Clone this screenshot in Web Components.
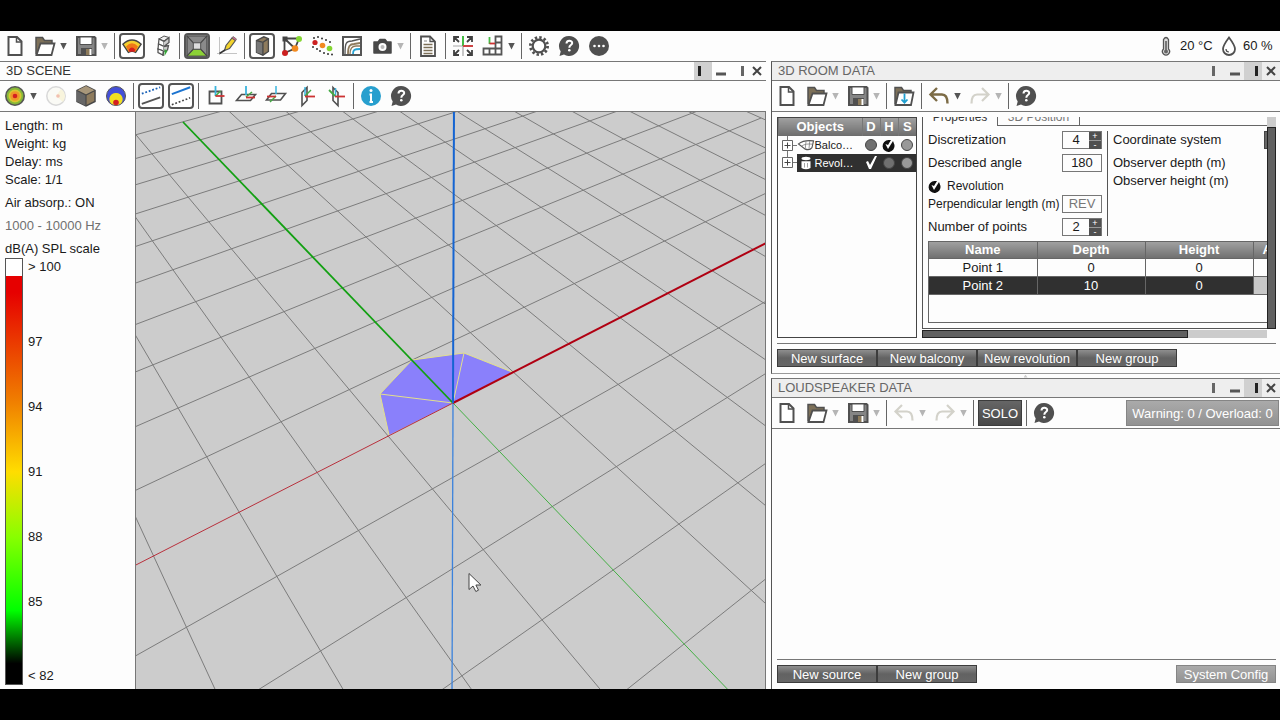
<!DOCTYPE html>
<html lang="en">
<head>
<meta charset="utf-8">
<title>3D Scene</title>
<style>
html, body { margin: 0; background: #000; }
body { box-sizing: border-box; min-height: 100vh; padding: 31px 0; display: flex; flex-direction: column; font: 13px/18px "Liberation Sans", Arial, sans-serif; color: #1a1a1a; }
</style>
</head>
<body>
<sound-app></sound-app>
<script>
const ICONS = {
  new: '<path d="M5.500 3h8.500l4.500 4.500V21h-13z" fill="#fff" stroke="#505050" stroke-width="2"/><path d="M13.500 3v5h5" fill="none" stroke="#505050" stroke-width="1.500"/>',
  open: '<path d="M3 20.500V3.500h6.500l2 3h7.500v4" fill="#7d7058" stroke="#505050" stroke-width="1.500"/><path d="M3.500 21l4-11.500h14L18.500 21z" fill="#fff" stroke="#505050" stroke-width="1.800"/>',
  load: '<path d="M3 20.500V3.500h6.500l2 3h7.500v4" fill="#7d7058" stroke="#505050" stroke-width="1.500"/><path d="M3.500 21l3-12.500h15L19 21z" fill="#fff" stroke="#505050" stroke-width="1.800"/><path d="M12.500 9.500v9M9.500 15.500l3 3.200 3-3.200" fill="none" stroke="#1f9fd0" stroke-width="1.800"/>',
  save: '<path d="M3 3h17.500l1 1V21H3z" fill="#858585" stroke="#505050" stroke-width="2"/><path d="M6 3h12v7.500H6z" fill="#fff" stroke="#505050"/><path d="M7 14h11v7H7z" fill="#505050"/><path d="M12 15h4v6h-4z" fill="#8c7a5a"/><path d="M15.500 15h2v6h-2z" fill="#fff"/>',
  map: '<path d="M2 10Q12 1 22 10L16 19q-4-2.500-8 0z" fill="#f5cf30" stroke="#444" stroke-width="1.500"/><path d="M5.500 12.500Q12 5.500 18.500 12.500L15.500 18.500q-3.500-2-7 0z" fill="#f07818"/><path d="M8.500 16q3.500-4.500 7 0l-1 2.500q-2.500-1-5 0z" fill="#d81e1e"/>',
  speaker: '<path d="M9 5l5-3 5 1.500-5 3.500z" fill="#eee" stroke="#555"/><path d="M9 5l5 2.500v5L8.500 10z" fill="#fff" stroke="#555" stroke-width="1.300"/><path d="M8.500 10l5.500 2.500-.5 4.500-5.500-2z" fill="#fff" stroke="#555" stroke-width="1.300"/><path d="M8 15l5.500 2-.5 4-5-2.500z" fill="#fff" stroke="#555" stroke-width="1.300"/><path d="M14 7.500l5-4v5l-5 4 4.500-1-1 4.500-4 1.500-.5 4.500" fill="#ccc" stroke="#555" stroke-width="1.300"/><path d="M14.500 15l3 2-3 5z" fill="#36a53a"/>',
  room: '<path d="M1 1h22v22H1z" fill="#8a8a8a" stroke="#484848" stroke-width="1.500"/><path d="M1 23L8 15.500h8L23 23z" fill="#8cd136" stroke="#484848"/><path d="M8 8.500h8v7H8z" fill="#ddd" stroke="#484848"/><path d="M1 1l7 7.500M23 1l-7 7.500M1 23l7-7.500M23 23l-7-7.500" stroke="#484848" stroke-width="1.300"/>',
  pencil: '<path d="M4.500 3v18M2 19.500h20" stroke="#c4c4c4" stroke-width="1"/><path d="M9.500 16.500l1.500-5 6-7.500 3.500 2.500-6 8z" fill="#f2d32c" stroke="#555" stroke-width="1.200"/><path d="M17 4l1-1.500 3.500 2.500-1 1.500z" fill="#d9688c" stroke="#666" stroke-width=".8"/><path d="M4.500 19.500l5.500-3.500" stroke="#333" stroke-width="1.500"/>',
  block: '<path d="M6 6l8-4 5 2v14l-6 4-7-3z" fill="#8e7b5d" stroke="#484848" stroke-width="1.500"/><path d="M6 6l7 2v13l-7-2z" fill="#777"/><path d="M13 8v14M6 6l7 2 6-4" fill="none" stroke="#484848" stroke-width="1.500"/>',
  cube: '<path d="M12 2l9 4.500v11L12 22l-9-4.500v-11z" fill="#8e7b5d" stroke="#484848" stroke-width="1.500"/><path d="M3 6.500l9 4.500v11l-9-4.500z" fill="#666"/><path d="M12 2l9 4.500-9 4.500-9-4.500z" fill="#a8977a"/><path d="M3 6.500l9 4.500 9-4.500M12 11v11" fill="none" stroke="#484848" stroke-width="1.200"/>',
  nodes: '<path d="M4.500 4.500h14.500L15 14.500 4.500 19zL15 14.500" fill="none" stroke="#444" stroke-width="1.800"/><path d="M2.500 2.500h5v5h-5z" fill="#444"/><circle cx="19" cy="5" r="3" fill="#84d632"/><circle cx="15" cy="14.500" r="3.300" fill="#f28a20"/><circle cx="5" cy="19" r="3" fill="#cc2020"/>',
  sources: '<g fill="#333"><circle cx="4" cy="4" r="1"/><circle cx="8" cy="3" r="1"/><circle cx="12" cy="4.500" r="1"/><circle cx="16" cy="6" r="1"/><circle cx="20" cy="8" r="1"/><circle cx="3" cy="13" r="1"/><circle cx="7" cy="15" r="1"/><circle cx="10" cy="17" r="1"/><circle cx="14" cy="19" r="1"/><circle cx="18" cy="20" r="1"/><circle cx="22" cy="20.500" r="1"/></g><circle cx="5" cy="8.500" r="2.600" fill="#cc2020"/><circle cx="12.500" cy="11.500" r="2.800" fill="#f28a20"/><circle cx="19.500" cy="14.500" r="2.800" fill="#84d632"/>',
  contours: '<path d="M3 3h18v18H3z" fill="#fff" stroke="#555" stroke-width="2"/><path d="M5 20c0-11 1-13 7-13l8-2" fill="none" stroke="#555" stroke-width="1.300"/><path d="M8 20c0-8 2-10 6-10l6-1" fill="none" stroke="#8e7b5d" stroke-width="1.800"/><path d="M10 20c0-5 2-8 6-8h4" fill="none" stroke="#8e7b5d" stroke-width="1.300"/><path d="M13 20c0-4 1-5 7-5" fill="none" stroke="#25a3d4" stroke-width="1.800"/>',
  camera: '<path d="M4 8h4l2-2.500h5L17 8h4v11H4z" fill="#484848" stroke="#484848" stroke-width="1.500" stroke-linejoin="round"/><circle cx="12.500" cy="13" r="4" fill="#fff"/><circle cx="12.500" cy="13" r="2" fill="#bbb"/>',
  doc: '<path d="M5 2.500h9l5 5V22H5z" fill="#fff" stroke="#505050" stroke-width="1.800"/><path d="M14 2.500v5h5" fill="none" stroke="#505050" stroke-width="1.300"/><path d="M7.500 10.500h9M7.500 13.500h9M7.500 16.500h9M7.500 19.500h9" stroke="#7d7058" stroke-width="1.500"/><path d="M8 7h3" stroke="#888"/>',
  fit: '<path d="M12 2v20" stroke="#aaa" stroke-width="1.300"/><path d="M2 12h20" stroke="#bbb" stroke-width="1.300"/><path d="M12 2v10" stroke="#4b4" stroke-width="2"/><path d="M12 12h10" stroke="#c44" stroke-width="2"/><path d="M3 8V3h5M3 3l5 5M16 3h5v5M21 3l-5 5M3 16v5h5M3 21l5-5M21 16v5h-5M21 21l-5-5" fill="none" stroke="#404040" stroke-width="1.800"/>',
  views: '<path d="M2.500 14.500h6v6h-6zM8.500 14.500h6v6h-6zM14.500 14.500h6v6h-6zM14.500 8.500h6v6h-6zM14.500 2.500h6v6h-6z" fill="#fff" stroke="#555" stroke-width="1.800"/><path d="M8.500 3v7" stroke="#4b4" stroke-width="1.800"/><path d="M8.500 9.500h5.500" stroke="#c33" stroke-width="1.800"/>',
  gear: '<circle cx="12" cy="12" r="8.600" fill="none" stroke="#505050" stroke-width="2.800" stroke-dasharray="2.400 2.103"/><circle cx="12" cy="12" r="6.300" fill="#fff" stroke="#505050" stroke-width="2.200"/>',
  help: '<path d="M12 2a10 10 0 1 1-5 18.600L2.500 22l1.200-4.500A10 10 0 0 1 12 2z" fill="#505050"/><path d="M9.500 9.500c0-3.500 5.700-3.500 5.700-.5 0 2.200-2.900 2-2.900 4.700" fill="none" stroke="#fff" stroke-width="2"/><circle cx="12.300" cy="16.300" r="1.300" fill="#fff"/>',
  more: '<circle cx="12" cy="12" r="10" fill="#505050"/><circle cx="7.500" cy="12" r="1.300" fill="#fff"/><circle cx="12" cy="12" r="1.300" fill="#fff"/><circle cx="16.500" cy="12" r="1.300" fill="#fff"/>',
  info: '<circle cx="12" cy="12" r="10" fill="#279fce"/><circle cx="12" cy="6.500" r="1.500" fill="#fff"/><path d="M10.500 10.500H12v7.500M10.500 18h3.500" fill="none" stroke="#fff" stroke-width="2"/>',
  target: '<circle cx="12" cy="12" r="9.200" fill="#86b83a" stroke="#555" stroke-width="1.600"/><circle cx="12" cy="12" r="6.500" fill="#d8c830"/><circle cx="12" cy="12" r="4.800" fill="#f0962a"/><circle cx="12" cy="12" r="2.300" fill="#d42020"/>',
  faint: '<circle cx="12" cy="12" r="9.200" fill="#fafaf5" stroke="#d8d8d8" stroke-width="1.500"/><path d="M12 12l5-7a9 9 0 0 1 2 13z" fill="#f8f4dc"/><circle cx="14" cy="12" r="1.800" fill="#f2c0b0"/>',
  lobes: '<circle cx="12" cy="12" r="9.500" fill="#4450d8" stroke="#555"/><path d="M12 9a6.300 6.300 0 0 1 5 10.500 9 9 0 0 1-10 0A6.300 6.300 0 0 1 12 9z" fill="#f2e020"/><circle cx="12" cy="18.500" r="2.800" fill="#d42020"/>',
  dotline: '<path d="M2 9.500l20-7" stroke="#1c63b8" stroke-width="2" stroke-dasharray="2 2"/><path d="M2 20.500l20-7" stroke="#555" stroke-width="2"/>',
  linedot: '<path d="M2 10l20-7.500" stroke="#1c74d0" stroke-width="2.200"/><path d="M2 21.500l20-7.500" stroke="#444" stroke-width="1.800" stroke-dasharray="2 2"/>',
  front: '<path d="M5.500 7.500h12v12h-12z" fill="none" stroke="#505050" stroke-width="1.800"/><path d="M11.500 2v10" stroke="#3ab4dc" stroke-width="1.800"/><path d="M11.500 12l5-5" stroke="#4a4" stroke-width="1.500"/><path d="M11.500 12h9" stroke="#c33" stroke-width="1.800"/>',
  top: '<path d="M2.500 16.500l5-6h14l-5 6z" fill="none" stroke="#505050" stroke-width="1.600"/><path d="M12 2v9" stroke="#3ab4dc" stroke-width="1.800"/><path d="M12 13l6-5" stroke="#4a4" stroke-width="1.500"/><path d="M12 13.500h9" stroke="#c33" stroke-width="1.800"/>',
  bottom: '<path d="M2.500 16l5-6.500h14l-5 6.500z" fill="none" stroke="#505050" stroke-width="1.600"/><path d="M12 2v8" stroke="#3ab4dc" stroke-width="1.500"/><path d="M12 12l-6 6" stroke="#4a4" stroke-width="1.500"/><path d="M3 12.500h9" stroke="#c33" stroke-width="1.800"/>',
  left: '<path d="M8 8.500l5-5v13l-5 5z" fill="none" stroke="#505050" stroke-width="1.600"/><path d="M11 3v9" stroke="#3ab4dc" stroke-width="1.500"/><path d="M11 12l6-6" stroke="#4a4" stroke-width="1.500"/><path d="M11 12.500h10" stroke="#c33" stroke-width="1.800"/>',
  right: '<path d="M9 3.500l5 5v13l-5-5z" fill="none" stroke="#505050" stroke-width="1.600"/><path d="M11.500 4v8" stroke="#3ab4dc" stroke-width="1.500"/><path d="M5 6l6 6" stroke="#4a4" stroke-width="1.800"/><path d="M11 12.500h10" stroke="#c33" stroke-width="1.800"/>',
  undo: '<path d="M10 4L3.500 10.500 10 17M4 10.500h11q5.500 0 5.500 9" fill="none" stroke="#7c6b45" stroke-width="2.400"/>',
  undooff: '<path d="M10 4L3.500 10.500 10 17M4 10.500h11q5.500 0 5.500 9" fill="none" stroke="#d3d2ca" stroke-width="2.200"/>',
  redooff: '<path d="M14 4l6.500 6.500L14 17M20 10.500H9q-5.500 0-5.500 9" fill="none" stroke="#d3d2ca" stroke-width="2.200"/>',
  thermo: '<path d="M9.500 5.500q2.500-4 5 0v9.500a3.500 3.500 0 1 1-5 0z" fill="#ddd" stroke="#555" stroke-width="1.300"/><path d="M12 7v10" stroke="#777" stroke-width="2"/><circle cx="12" cy="17.500" r="2" fill="#666"/>',
  drop: '<path d="M12 3.500q-6 8-6 11.500a6 6 0 0 0 12 0q0-3.500-6-11.500z" fill="#fff" stroke="#505050" stroke-width="1.800"/><path d="M9 15q0 3 3 3" fill="none" stroke="#505050" stroke-width="1.200"/>',
  close: '<path d="M8 8l8 8M16 8l-8 8" stroke="#444" stroke-width="2"/>',
  minimize: '<path d="M7 13.500h10v3H7z" fill="#555"/>',
  balcony: '<path d="M2 10.500Q9 5 22 6.500l-2 9q-3 4-9 2z" fill="#fff" stroke="#555" stroke-width="1.500"/><path d="M6 13.500q6-4 15-2.500M12 7l-1 10M17 6.500l-1 10" fill="none" stroke="#777"/>',
  revolve: '<ellipse cx="12" cy="6" rx="6" ry="2.200" fill="#fff"/><path d="M6 9.500h12v9q-6 3.500-12 0z" fill="#fff"/><path d="M10 12v6M14 12v6" stroke="#888"/>'
};

function define(name, html, setup) {
  const t = document.createElement('template');
  t.innerHTML = html;
  customElements.define(name, class extends HTMLElement {
    connectedCallback() {
      if (this.shadowRoot) return;
      this.attachShadow({ mode: 'open' }).append(t.content.cloneNode(true));
      if (setup) setup(this, this.shadowRoot);
    }
  });
}

define('ui-icon', `<style>:host{display:block;flex:none;width:24px;height:24px}svg{display:block;width:100%;height:100%}</style><svg viewBox="0 0 24 24" aria-hidden="true"></svg>`,
  (el, root) => { root.querySelector('svg').innerHTML = ICONS[el.getAttribute('name')] || ''; });

define('tool-button', `<style>
:host{display:block;flex:none;width:30px;height:30px}
button{box-sizing:border-box;width:26px;height:26px;margin:2px;padding:0;border:0;background:none;display:flex;align-items:center;justify-content:center}
:host([pressed]) button{border:2px solid #555;border-radius:4px;background:#fff}
:host([pressed]) ui-icon{width:22px;height:22px}
</style><button type="button"></button>`,
  (el, root) => {
    const n = el.getAttribute('name'), b = root.querySelector('button');
    b.setAttribute('aria-label', n);
    b.innerHTML = `<ui-icon name="${n}"></ui-icon>`;
  });

define('tool-caret', `<style>
:host{display:block;flex:none;width:11px;height:30px;color:#555}
:host([off]){color:#b5b5b5}
button{display:flex;align-items:center;width:8px;height:30px;padding:0;border:0;background:none;color:inherit}
i{width:7px;height:7px;background:currentColor;clip-path:polygon(0 0,100% 0,50% 100%)}
</style><button type="button" aria-label="options"><i></i></button>`);

define('tool-sep', `<style>:host{display:block;flex:none;box-sizing:border-box;width:5px;height:26px;padding:0 2px}i{display:block;width:1px;height:100%;background:#666}</style><i></i>`);

define('tool-bar', `<style>:host{display:flex;align-items:center;height:30px;background:#fdfdfd;border-bottom:1px solid #777}</style><slot></slot>`);

define('push-button', `<style>
:host{display:block;flex:none;width:100px;height:18px}
button{box-sizing:border-box;display:flex;align-items:center;justify-content:center;width:100%;height:100%;padding:1px 0 0;border:1px solid #3c3c3c;background:linear-gradient(#8e8e8e,#626262 50%,#666);color:#fff;font:inherit;line-height:16px;white-space:nowrap}
:host([muted]) button{background:linear-gradient(#aaa,#929292);border-color:#858585}
:host([flat]) button{background:linear-gradient(#666,#484848)}
</style><button type="button"><slot></slot></button>`);

define('panel-window', `<style>
:host{display:flex;flex-direction:column;background:#fdfdfd;border-top:1px solid #777;color:#1a1a1a}
header{display:flex;align-items:center;height:18px;padding-left:6px;border-bottom:1px solid #777;background:#fdfdfd;color:#333}
:host([dim]) header{background:#eee;color:#666}
h2{flex:1;margin:0;font:inherit;white-space:nowrap}
button{width:18px;height:18px;padding:0;border:0;background:none;display:flex;align-items:center;flex:none}
button.center{justify-content:center}
button ui-icon{width:24px;height:24px}
i{width:3px;height:10px;background:#666}
.l i{margin-left:4px}.r i{margin-left:11px}
.on{background:#d0d0d0}.on i{background:#222}
main{flex:1;display:flex;flex-direction:column;min-height:0}
</style>
<header><h2></h2>
<button type="button" class="l" aria-label="dock left"><i></i></button>
<button type="button" class="center" aria-label="minimize"><ui-icon name="minimize"></ui-icon></button>
<button type="button" class="r" aria-label="dock right"><i></i></button>
<button type="button" class="center" aria-label="close"><ui-icon name="close"></ui-icon></button></header>
<slot name="bar"></slot><main><slot></slot></main>`,
  (el, root) => {
    root.querySelector('h2').textContent = el.getAttribute('heading');
    root.querySelector(el.getAttribute('dock') === 'left' ? '.l' : '.r').classList.add('on');
  });

define('spl-legend', `<style>
:host{box-sizing:border-box;display:flex;flex-direction:column;flex:none;width:136px;padding:5px 0 4px 5px;border-right:1px solid #777;background:#fdfdfd;white-space:nowrap}
p{margin:0 0 5px}.dim{color:#707070}p.last{margin:0}
.scale{flex:1;display:flex;gap:5px;min-height:360px}
.bar{box-sizing:border-box;width:18px;border:1px solid #555;display:flex;flex-direction:column;background:#fff}
.bar i{flex:1;margin-top:17px;background:linear-gradient(#e60000 4%,#f08000 31%,#ffdd00 48%,#88ff00 64%,#00ff00 82%,#000 95%)}
.labels{display:flex;flex-direction:column}
.mid{flex:1;display:flex;flex-direction:column;padding:33px 0 32px}
.mid span{flex:1;display:flex;align-items:center}
</style>
<p>Length: m<br>Weight: kg<br>Delay: ms<br>Scale: 1/1</p>
<p>Air absorp.: ON</p><p class="dim">1000 - 10000 Hz</p><p class="last">dB(A) SPL scale</p>
<div class="scale"><div class="bar"><i></i></div><div class="labels"><span>&gt; 100</span><div class="mid"><span>97</span><span>94</span><span>91</span><span>88</span><span>85</span></div><span>&lt; 82</span></div></div>`);

define('scene-view', `<style>:host{display:block;flex:1;min-width:0;position:relative;background:#ccc;border-right:1px solid #777;overflow:hidden}svg{position:absolute;inset:0;width:100%;height:100%}</style>
<svg viewBox="136 112 629 577" preserveAspectRatio="xMidYMid slice" role="img" aria-label="3D scene">
<g id="grid" stroke="#7c7c7c" stroke-width="1"></g>
<path d="M389 435L380 394 412 360 464 353 512 372 453 403z" fill="#8a80fb"/>
<path d="M389 435L380 394 412 360 464 353 512 372M380 394L453 403 464 353" fill="none" stroke="#e3e08c" stroke-width="1"/>
<path d="M453 403L130 568" stroke="#b8303c" stroke-width="1"/>
<path d="M453 403L735 697" stroke="#45b045" stroke-width="1"/>
<path d="M453 403L452 700" stroke="#3b82dc" stroke-width="1.300"/>
<path d="M453 403L183 122" stroke="#12a012" stroke-width="1.800"/>
<path d="M453 403L770 241" stroke="#b00012" stroke-width="2"/>
<path d="M453 403L454 100" stroke="#1464d2" stroke-width="2"/>
<path d="M469 573.500v16l4-3.500 2.800 5.500 2.700-1.300-2.600-5.200h5z" fill="#fff" stroke="#444" stroke-width="1"/>
</svg>`,
  (el, root) => {
    // perspective projection of the ground plane, one unit per grid cell
    const p = (x, y) => {
      const w = 1 + 0.0417 * x + 0.06145 * y;
      return [(453.3 + 81.3 * x - 15.83 * y) / w, (402.7 - 15.2 * x - 20.6 * y) / w];
    };
    let s = '';
    const line = (a, b) => { s += `<path d="M${a.map(v => v.toFixed(1))}L${b.map(v => v.toFixed(1))}"/>`; };
    for (let i = -7; i <= 10; i++) if (i) { line(p(i, -8), p(i, 10)); line(p(-7, i), p(10, i)); }
    root.querySelector('#grid').innerHTML = s;
  });

define('object-tree', `<style>
:host{box-sizing:border-box;display:block;flex:none;width:140px;border:1px solid #444;background:#fdfdfd}
table{border-collapse:collapse;table-layout:fixed;width:100%}
th,td{padding:0;height:18px}
th{background:linear-gradient(#a0a0a0,#6c6c6c);color:#fff;border-left:1px solid #777}
td{text-align:center}
.name{display:flex;align-items:center;height:18px;font-size:11px}
.tree{width:18px;display:flex;flex:none;height:18px;background:#fdfdfd}
.tree svg{display:block}
.name ui-icon{width:18px;height:18px}
tr.on td{background:#303030;color:#fff}
input{appearance:none;display:block;width:12px;height:12px;margin:0 auto;border:1px solid #444;border-radius:50%;background:#707070;box-sizing:border-box}
input.s{background:#999}
input:checked{width:14px;height:16px;border:0;border-radius:0;background:none}
input:checked::after{content:"";display:block;width:14px;height:16px;background:#111;clip-path:path("M6.500 3A6 6 0 1 0 12.500 8L11 4 6 12 3.500 7 6 8 9 3z")}
tr.on input:checked::after{background:#fff;clip-path:path("M2 7l2-1 2 4 5-9 2 0-6 13H5z")}
</style>
<table><colgroup><col><col style="width:18px"><col style="width:18px"><col style="width:18px"></colgroup>
<thead><tr><th>Objects</th><th>D</th><th>H</th><th>S</th></tr></thead>
<tbody>
<tr><td><div class="name"><span class="tree"><svg width="18" height="18"><path d="M8.500 0v18M13 9.500h5" stroke="#777"/><path d="M3.500 4.500h10v10h-10z" fill="#fff" stroke="#666"/><path d="M5.500 9.500h6M8.500 6.500v6" stroke="#444"/></svg></span><ui-icon name="balcony"></ui-icon><span>Balco…</span></div></td>
<td><input type="checkbox" aria-label="Balcony D"></td><td><input type="checkbox" checked aria-label="Balcony H"></td><td><input class="s" type="checkbox" aria-label="Balcony S"></td></tr>
<tr class="on"><td><div class="name"><span class="tree"><svg width="18" height="18"><path d="M8.500 0v9M13 8.500h5" stroke="#777"/><path d="M3.500 3.500h10v10h-10z" fill="#fff" stroke="#666"/><path d="M5.500 8.500h6M8.500 5.500v6" stroke="#444"/></svg></span><ui-icon name="revolve"></ui-icon><span>Revol…</span></div></td>
<td><input type="checkbox" checked aria-label="Revolution D"></td><td><input type="checkbox" aria-label="Revolution H"></td><td><input class="s" type="checkbox" aria-label="Revolution S"></td></tr>
</tbody></table>`);

define('room-properties', `<style>
:host{display:grid;flex:1;min-width:0;grid-template-columns:minmax(0,1fr) 9px;grid-template-rows:212px 9px}
.view{box-sizing:border-box;overflow:hidden;border-left:1px solid #555;border-bottom:1px solid #555}
.tabs{display:flex;align-items:flex-end;height:9px;overflow:hidden;font-size:12px;line-height:14px}
.tabs button{flex:none;box-sizing:border-box;height:18px;padding:0;border:0;background:none;font:inherit;color:#333;width:74px;text-align:center}
.tabs .off{width:83px;border:1px solid #666;color:#777}
.tabs i{flex:1;height:1px;background:#666}
.form{display:flex;padding:5px 0 5px 5px}
.left{flex:none;width:174px;padding-right:5px;border-right:1px solid #555}
.row{display:flex;align-items:center;justify-content:space-between;height:18px;margin-bottom:5px;white-space:nowrap}
.row.tight,.row.end{margin-bottom:0}
.small{font-size:12px}
.check{justify-content:flex-start}
.right{flex:none;padding-left:5px;white-space:nowrap}
.field{box-sizing:border-box;display:flex;width:40px;height:18px;border:1px solid #777}
.field input{min-width:0;flex:1;width:100%;padding:0;border:0;background:none;font:inherit;text-align:center;color:#1a1a1a}
.field input:disabled{color:#777}
.spin{display:flex;flex-direction:column;width:12px}
.spin button{flex:1;padding:0;border:0;background:#505050;color:#fff;font-size:9px;line-height:8px}
.spin button+button{border-top:1px solid #999}
.check input{appearance:none;width:19px;height:16px;margin:0}
.check input::after{content:"";display:block;width:14px;height:16px;background:#111;clip-path:path("M6.500 3A6 6 0 1 0 12.500 8L11 4 6 12 3.500 7 6 8 9 3z")}
.coord span{width:151px}.coord select{width:60px;height:18px;border:1px solid #444;background:#666;padding:0;appearance:none}
.points{margin-left:5px;height:80px;border:1px solid #666;border-right:0;overflow:hidden}
table{border-collapse:collapse;table-layout:fixed;width:400px}
th{height:16px;padding:0;line-height:16px;color:#fff;background:linear-gradient(#a0a0a0,#707070)}
td{height:17px;padding:0;line-height:17px;text-align:center}
th,td{border-right:1px solid #666;border-bottom:1px solid #666}
th.cut{text-align:left;padding-left:9px}
tr.on td{background:#303030;color:#fff}tr.on td:last-child{background:#c8c8c8}
.v{box-sizing:border-box;background:#ccc;padding-top:10px}
.v i{display:block;height:100%;box-sizing:border-box;background:#606060;border:1px solid #222}
.h{margin-top:1px;background:#ccc}.h i{display:block;box-sizing:border-box;width:77%;height:8px;background:#606060;border:1px solid #222}
</style>
<div class="view">
<div class="tabs"><button type="button">Properties</button><button type="button" class="off">3D Position</button><i></i></div>
<div class="form"><div class="left">
<div class="row"><label for="d">Discretization</label><span class="field"><input id="d" value="4"><span class="spin"><button type="button">+</button><button type="button">-</button></span></span></div>
<div class="row"><label for="a">Described angle</label><span class="field"><input id="a" value="180"></span></div>
<div class="row check small tight"><input type="checkbox" id="r" checked><label for="r">Revolution</label></div>
<div class="row"><label class="small" for="p">Perpendicular length (m)</label><span class="field"><input id="p" value="REV" disabled></span></div>
<div class="row end"><label for="n">Number of points</label><span class="field"><input id="n" value="2"><span class="spin"><button type="button">+</button><button type="button">-</button></span></span></div>
</div><div class="right">
<div class="row coord"><span>Coordinate system</span><select aria-label="Coordinate system"></select></div>
<div class="row tight">Observer depth (m)</div><div class="row tight">Observer height (m)</div>
</div></div>
<div class="points"><table><colgroup><col style="width:108px"><col style="width:108px"><col style="width:108px"><col></colgroup>
<thead><tr><th>Name</th><th>Depth</th><th>Height</th><th class="cut">A</th></tr></thead>
<tbody><tr><td>Point 1</td><td>0</td><td>0</td><td></td></tr><tr class="on"><td>Point 2</td><td>10</td><td>0</td><td></td></tr></tbody></table></div>
</div>
<div class="v"><i></i></div>
<div class="h"><i></i></div>`);

define('sound-app', `<style>
:host{flex:1;display:flex;flex-direction:column;background:#fdfdfd}
.main{height:30px;display:flex;align-items:center;white-space:nowrap}
.push{flex:1}
.main ui-icon{margin:0 2px}
.temp{width:35px}.hum{width:37px}
.work{flex:1;display:grid;grid-template-columns:minmax(0,766fr) minmax(0,509fr);gap:5px}
.body{flex:1;display:flex}
.side{display:flex;flex-direction:column;min-width:0}
.side panel-window{border-left:1px solid #555}
.room{border-bottom:1px solid #999}
.speakers{flex:1}
.split{height:4px;display:flex;justify-content:center;align-items:center}
.split i{width:4px;height:3px;background:#ccc;clip-path:polygon(50% 0,100% 100%,0 100%)}
.data{display:flex;gap:5px;padding:5px 4px 5px 5px}
.actions{display:flex;margin:0 4px 0 5px;padding:5px 0 6px;border-top:1px solid #777}
.empty{flex:1}
.solo{width:44px;height:26px;margin:0 2px}
.warn{width:153px;height:26px;margin-right:1px}
</style>
<div class="main">
<tool-button name="new"></tool-button><tool-button name="open"></tool-button><tool-caret></tool-caret><tool-button name="save"></tool-button><tool-caret off></tool-caret><tool-sep></tool-sep>
<tool-button name="map" pressed></tool-button><tool-button name="speaker"></tool-button><tool-sep></tool-sep>
<tool-button name="room" pressed></tool-button><tool-button name="pencil"></tool-button><tool-sep></tool-sep>
<tool-button name="block" pressed></tool-button><tool-button name="nodes"></tool-button><tool-button name="sources"></tool-button><tool-button name="contours"></tool-button><tool-button name="camera"></tool-button><tool-caret off></tool-caret><tool-sep></tool-sep>
<tool-button name="doc"></tool-button><tool-sep></tool-sep>
<tool-button name="fit"></tool-button><tool-button name="views"></tool-button><tool-caret></tool-caret><tool-sep></tool-sep>
<tool-button name="gear"></tool-button><tool-button name="help"></tool-button><tool-button name="more"></tool-button>
<span class="push"></span><ui-icon name="thermo"></ui-icon><span class="temp">20 °C</span><ui-icon name="drop"></ui-icon><span class="hum">60 %</span>
</div>
<div class="work">
<panel-window heading="3D SCENE" dock="left">
<tool-bar slot="bar"><tool-button name="target"></tool-button><tool-caret></tool-caret><tool-button name="faint"></tool-button><tool-button name="cube"></tool-button><tool-button name="lobes"></tool-button><tool-sep></tool-sep>
<tool-button name="dotline" pressed></tool-button><tool-button name="linedot" pressed></tool-button><tool-sep></tool-sep>
<tool-button name="front"></tool-button><tool-button name="top"></tool-button><tool-button name="bottom"></tool-button><tool-button name="left"></tool-button><tool-button name="right"></tool-button><tool-sep></tool-sep>
<tool-button name="info"></tool-button><tool-button name="help"></tool-button></tool-bar>
<div class="body"><spl-legend></spl-legend><scene-view></scene-view></div>
</panel-window>
<div class="side">
<panel-window class="room" heading="3D ROOM DATA" dock="right" dim>
<tool-bar slot="bar"><tool-button name="new"></tool-button><tool-button name="open"></tool-button><tool-caret off></tool-caret><tool-button name="save"></tool-button><tool-caret off></tool-caret><tool-sep></tool-sep><tool-button name="load"></tool-button><tool-sep></tool-sep><tool-button name="undo"></tool-button><tool-caret></tool-caret><tool-button name="redooff"></tool-button><tool-caret off></tool-caret><tool-sep></tool-sep><tool-button name="help"></tool-button></tool-bar>
<div class="data"><object-tree></object-tree><room-properties></room-properties></div>
<div class="actions"><push-button>New surface</push-button><push-button>New balcony</push-button><push-button>New revolution</push-button><push-button>New group</push-button></div>
</panel-window>
<div class="split"><i></i></div>
<panel-window class="speakers" heading="LOUDSPEAKER DATA" dock="right" dim>
<tool-bar slot="bar"><tool-button name="new"></tool-button><tool-button name="open"></tool-button><tool-caret off></tool-caret><tool-button name="save"></tool-button><tool-caret off></tool-caret><tool-sep></tool-sep><tool-button name="undooff"></tool-button><tool-caret off></tool-caret><tool-button name="redooff"></tool-button><tool-caret off></tool-caret><tool-sep></tool-sep><push-button class="solo" flat>SOLO</push-button><tool-sep></tool-sep><tool-button name="help"></tool-button><span class="push"></span><push-button class="warn" muted>Warning: 0 / Overload: 0</push-button></tool-bar>
<div class="empty"></div>
<div class="actions"><push-button>New source</push-button><push-button>New group</push-button><span class="push"></span><push-button muted>System Config</push-button></div>
</panel-window>
</div></div>`);
</script>
</body>
</html>
